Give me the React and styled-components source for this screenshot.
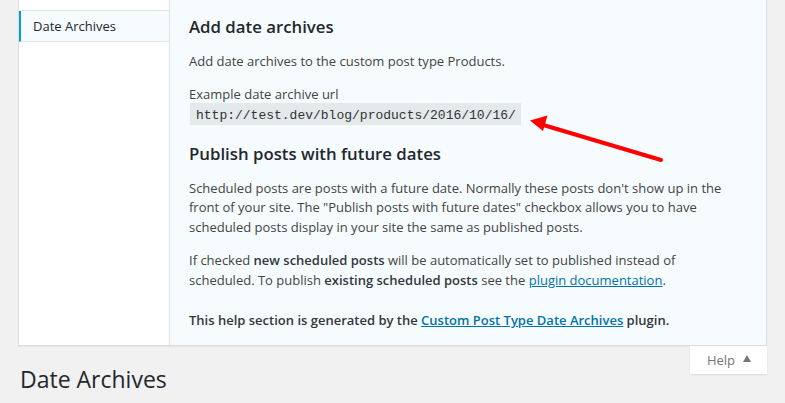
import React from 'react';
import styled, { createGlobalStyle } from 'styled-components';

const GlobalStyle = createGlobalStyle`
  html, body {
    margin: 0;
    padding: 0;
    background: #f1f1f1;
    overflow: hidden;
  }
  body {
    font-family: "Open Sans", "Liberation Sans", sans-serif;
    font-size: 13px;
    line-height: 1.5;
    color: #444;
  }
`;

const tabs = [
  { title: '', active: false, height: 11 },
  { title: 'Date Archives', active: true },
];

const App = () => (
  <Page>
    <GlobalStyle />
    <HelpPanel>
      <TabColumn>
        {tabs.map((tab, index) => (
          <Tab key={index} active={tab.active} height={tab.height}>
            {tab.title}
          </Tab>
        ))}
      </TabColumn>
      <Content>
        <Heading>Add date archives</Heading>
        <Text>Add date archives to the custom post type Products.</Text>
        <Text space={14}>
          Example date archive url
          <br />
          <Code>http://test.dev/blog/products/2016/10/16/</Code>
        </Text>
        <Heading>Publish posts with future dates</Heading>
        <Text>
          Scheduled posts are posts with a future date. Normally these posts don't show up in the
          front of your site. The "Publish posts with future dates" checkbox allows you to have
          scheduled posts display in your site the same as published posts.
        </Text>
        <Text space={14}>
          If checked <strong>new scheduled posts</strong> will be automatically set to published
          instead of scheduled. To publish <strong>existing scheduled posts</strong> see the{' '}
          <Link href="#">plugin documentation</Link>.
        </Text>
        <Text space={21}>
          <strong>
            This help section is generated by the <Link href="#">Custom Post Type Date Archives</Link>{' '}
            plugin.
          </strong>
        </Text>
      </Content>
    </HelpPanel>
    <HeaderRow>
      <PageTitle>Date Archives</PageTitle>
      <HelpToggle>
        Help <Caret />
      </HelpToggle>
    </HeaderRow>
    <Arrow width="785" height="403" viewBox="0 0 785 403">
      <line x1="661" y1="160" x2="540" y2="124" stroke="#f00" strokeWidth="4" strokeLinecap="round" />
      <polygon points="530,120.5 547.5,115.5 543,131" fill="#f00" />
    </Arrow>
  </Page>
);

export default App;

const Page = styled.div`
  position: relative;
  width: 785px;
  height: 403px;
`;
const HelpPanel = styled.div`
  display: flex;
  margin: 0 18px;
  background: #fff;
  border: 1px solid #dcdcdc;
  border-top: none;
  box-shadow: 0 1px 1px rgba(0, 0, 0, 0.04);
`;
const TabColumn = styled.ul`
  width: 150px;
  margin: 0;
  padding: 0;
  list-style: none;
  border-right: 1px solid #e1e1e1;
  background: #fff;
`;
const Tab = styled.li`
  box-sizing: border-box;
  height: ${({ height }) => (height ? `${height}px` : '31px')};
  padding-left: ${({ active }) => (active ? '12px' : '14px')};
  border-left: ${({ active }) => (active ? '2px solid #00a0d2' : 'none')};
  border-bottom: 1px solid #e5e5e5;
  background: ${({ active }) => (active ? '#f6fbfd' : '#fff')};
  color: #23282d;
  font-size: 13px;
  line-height: 30px;
`;
const Content = styled.div`
  flex: 1;
  padding: 0 30px 14px 19px;
  background: #f6fbfd;
`;
const Heading = styled.h2`
  margin: 17px 0 2px;
  font-size: 16.8px;
  font-weight: 600;
  line-height: 1.4;
  color: #23282d;
  &:first-child {
    margin-top: 15px;
  }
`;
const Text = styled.p`
  margin: ${({ space }) => space || 13}px 0 0;
  strong {
    font-weight: 600;
    color: #32373c;
  }
`;
const Code = styled.code`
  padding: 5px 5px 2px 6px;
  margin: 0 1px;
  background: rgba(0, 0, 0, 0.07);
  font-family: "Liberation Mono", "DejaVu Sans Mono", monospace;
  font-size: 13px;
  color: #333;
`;
const Link = styled.a`
  color: #0073aa;
  text-decoration: underline;
`;
const HeaderRow = styled.div`
  display: flex;
  justify-content: space-between;
  align-items: flex-start;
  margin: 0 18px 0 20px;
`;
const PageTitle = styled.h1`
  margin: 19px 0 0;
  font-size: 23px;
  font-weight: 400;
  line-height: 1.3;
  color: #23282d;
`;
const HelpToggle = styled.button`
  display: flex;
  align-items: center;
  gap: 8px;
  height: 28px;
  padding: 0 16px 0 17px;
  border: none;
  background: #fff;
  box-shadow: 0 1px 1px -1px rgba(0, 0, 0, 0.1), 0 1px 2px rgba(0, 0, 0, 0.08);
  font-family: "Open Sans", "Liberation Sans", sans-serif;
  font-size: 13px;
  color: #72777c;
`;
const Caret = styled.span`
  width: 0;
  height: 0;
  border-left: 4.5px solid transparent;
  border-right: 4.5px solid transparent;
  border-bottom: 7px solid #72777c;
  margin-top: -2px;
`;
const Arrow = styled.svg`
  position: absolute;
  left: 0;
  top: 0;
  pointer-events: none;
`;
